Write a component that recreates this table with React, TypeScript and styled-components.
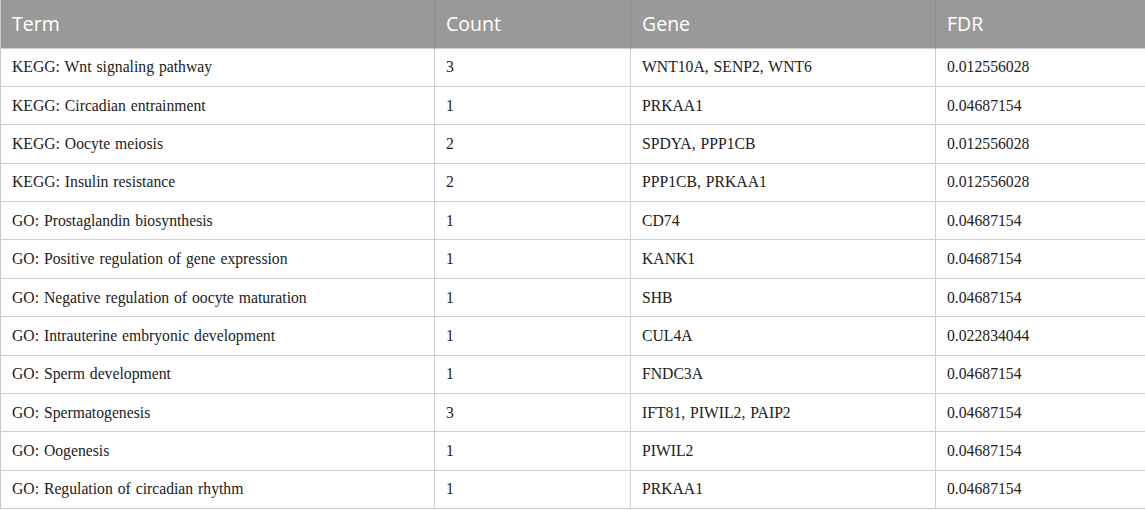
import React from "react";
import styled, { createGlobalStyle } from "styled-components";

const Global = createGlobalStyle`
  html, body { margin: 0; padding: 0; background: #ffffff; }
`;

const Table = styled.table`
  width: 1145px;
  border-collapse: collapse;
  table-layout: fixed;
  border-left: 1px solid #c8c8c8;
  border-right: 1px solid #c8c8c8;
  border-bottom: 1px solid #c8c8c8;
`;

const HeadCell = styled.th<{ $w: number }>`
  width: ${(p) => p.$w}px;
  height: 48px;
  box-sizing: border-box;
  padding: 0 11px;
  text-align: left;
  font-family: "Open Sans", sans-serif;
  font-weight: 400;
  font-size: 19.5px;
  color: #ffffff;
  background: #999999;
  border-left: 1px solid #8c8c8c;
  &:first-child { border-left: none; }
`;

const Row = styled.tr`
  height: 38.4px;
  border-top: 1px solid #d0d0d0;
`;

const Cell = styled.td`
  padding: 0 11px;
  font-family: "Liberation Serif", "Times New Roman", serif;
  font-size: 15.7px;
  word-spacing: 1px;
  color: #222222;
  border-left: 1px solid #d0d0d0;
  white-space: nowrap;
  &:first-child { border-left: none; }
`;

const rows: [string, string, string, string][] = [
  ["KEGG: Wnt signaling pathway", "3", "WNT10A, SENP2, WNT6", "0.012556028"],
  ["KEGG: Circadian entrainment", "1", "PRKAA1", "0.04687154"],
  ["KEGG: Oocyte meiosis", "2", "SPDYA, PPP1CB", "0.012556028"],
  ["KEGG: Insulin resistance", "2", "PPP1CB, PRKAA1", "0.012556028"],
  ["GO: Prostaglandin biosynthesis", "1", "CD74", "0.04687154"],
  ["GO: Positive regulation of gene expression", "1", "KANK1", "0.04687154"],
  ["GO: Negative regulation of oocyte maturation", "1", "SHB", "0.04687154"],
  ["GO: Intrauterine embryonic development", "1", "CUL4A", "0.022834044"],
  ["GO: Sperm development", "1", "FNDC3A", "0.04687154"],
  ["GO: Spermatogenesis", "3", "IFT81, PIWIL2, PAIP2", "0.04687154"],
  ["GO: Oogenesis", "1", "PIWIL2", "0.04687154"],
  ["GO: Regulation of circadian rhythm", "1", "PRKAA1", "0.04687154"],
];

export default function App() {
  return (
    <>
      <Global />
      <Table>
        <thead>
          <tr>
            <HeadCell $w={434}>Term</HeadCell>
            <HeadCell $w={196}>Count</HeadCell>
            <HeadCell $w={305}>Gene</HeadCell>
            <HeadCell $w={210}>FDR</HeadCell>
          </tr>
        </thead>
        <tbody>
          {rows.map((r, i) => (
            <Row key={i}>
              {r.map((c, j) => (
                <Cell key={j}>{c}</Cell>
              ))}
            </Row>
          ))}
        </tbody>
      </Table>
    </>
  );
}
